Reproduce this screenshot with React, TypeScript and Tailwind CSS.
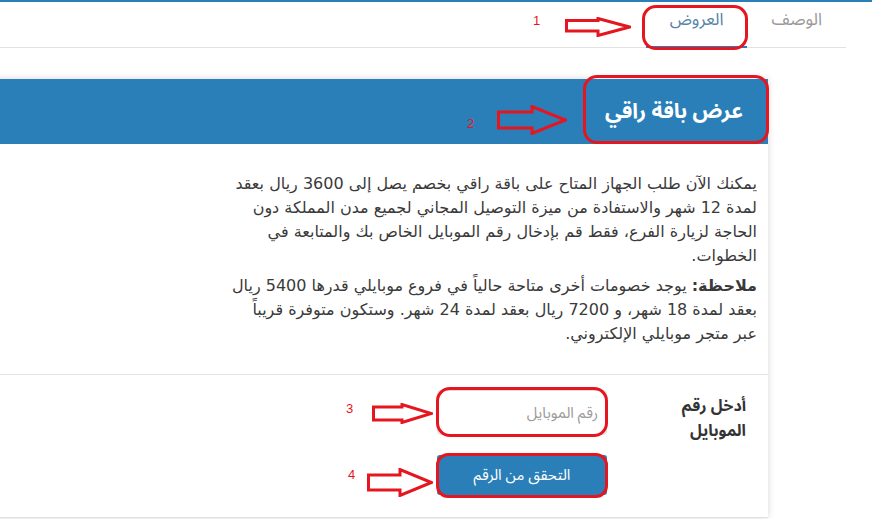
import React from 'react';

const RED = '#e5161f';

function Arrow({ x, y, w, h, st, sb, hx }: { x: number; y: number; w: number; h: number; st: number; sb: number; hx: number }) {
  const pts = `1.5,${st} ${hx},${st} ${hx},1.5 ${w - 1.5},${h / 2} ${hx},${h - 1.5} ${hx},${sb} 1.5,${sb}`;
  return (
    <svg className="absolute" style={{ left: x, top: y }} width={w} height={h} viewBox={`0 0 ${w} ${h}`}>
      <polygon points={pts} fill="none" stroke={RED} strokeWidth={3} strokeLinejoin="miter" />
    </svg>
  );
}

export default function App() {
  return (
    <div dir="rtl" className="relative w-[872px] h-[519px] overflow-hidden bg-white font-['Noto_Sans_Arabic','DejaVu_Sans',sans-serif] text-[#333]">
      <div className="h-[2px] bg-[#2a7fb8]" />

      <div className="mr-[26px] w-[1100px]">
        {/* tabs */}
        <div className="flex h-[46px] border-b border-[#e2e2e2]">
          <div className="px-6 pt-[6px] text-[17px] text-[#9a9a9a]">الوصف</div>
          <div className="-mb-px px-6 pt-[6px] text-[17px] text-[#5683a6] border-b-2 border-[#2a7fb8]">العروض</div>
        </div>

        {/* card */}
        <div className="mt-[31px] mr-[78px] w-[1000px] bg-white shadow-[0_0_7px_rgba(0,0,0,0.16)]">
          <div className="flex h-[65px] items-center bg-[#2a7fb8] pr-[25px] text-[21px] font-bold text-white">
            عرض باقة راقي
          </div>

          <div className="pr-[11px] pt-[28px] pb-[28px] font-['DejaVu_Sans',sans-serif] text-[16px] leading-[24px] text-[#3a3a3a]">
            <div className="whitespace-nowrap">
              <div>يمكنك الآن طلب الجهاز المتاح على باقة راقي بخصم يصل إلى 3600 ريال بعقد</div>
              <div>لمدة 12 شهر والاستفادة من ميزة التوصيل المجاني لجميع مدن المملكة دون</div>
              <div>الحاجة لزيارة الفرع، فقط قم بإدخال رقم الموبايل الخاص بك والمتابعة في</div>
              <div>الخطوات.</div>
            </div>
            <div className="mt-[6px] whitespace-nowrap">
              <div>
                <span className="font-bold">ملاحظة:</span> يوجد خصومات أخرى متاحة حالياً في فروع موبايلي قدرها 5400 ريال
              </div>
              <div>بعقد لمدة 18 شهر، و 7200 ريال بعقد لمدة 24 شهر. وستكون متوفرة قريباً</div>
              <div>عبر متجر موبايلي الإلكتروني.</div>
            </div>
          </div>

          <div className="flex border-t border-b border-[#e2e2e2] pt-[15px] pb-[22px]">
            <div className="w-[161px] pr-[22px] pt-[4px] text-[16px] font-bold leading-[25px] text-[#333]">
              <div>أدخل رقم</div>
              <div>الموبايل</div>
            </div>
            <div className="flex flex-col gap-[20px]">
              <input
                placeholder="رقم الموبايل"
                className="h-[45px] w-[170px] rounded-[4px] border border-[#dcdcdc] px-2 text-[15px] placeholder:text-[#9a9a9a] focus:outline-none"
              />
              <button className="h-[40px] w-[170px] rounded-[3px] bg-[#2a7fb8] text-[15px] text-white">
                التحقق من الرقم
              </button>
            </div>
          </div>
        </div>
      </div>

      {/* annotations */}
      <div dir="ltr">
        <div className="absolute left-[642px] top-[5px] h-[45px] w-[106px] rounded-[14px] border-[3px] border-[#e5161f]" />
        <div className="absolute left-[583px] top-[75px] h-[69px] w-[186px] rounded-[14px] border-[3px] border-[#e5161f]" />
        <div className="absolute left-[436px] top-[387px] h-[50px] w-[172px] rounded-[14px] border-[3px] border-[#e5161f]" />
        <div className="absolute left-[436px] top-[453px] h-[45px] w-[172px] rounded-[12px] border-[3px] border-[#e5161f]" />

        <Arrow x={565} y={17} w={66} h={20} st={3.5} sb={14} hx={33} />
        <Arrow x={497} y={105} w={70} h={30} st={7} sb={23} hx={35} />
        <Arrow x={372} y={403} w={61} h={21} st={4} sb={17} hx={30} />
        <Arrow x={367} y={468} w={66} h={29} st={7} sb={22} hx={33} />

        <span className="absolute left-[533px] top-[11px] font-['Liberation_Sans',sans-serif] text-[13px] text-[#e5161f]">1</span>
        <span className="absolute left-[467px] top-[114px] font-['Liberation_Sans',sans-serif] text-[13px] text-[#e5161f]">2</span>
        <span className="absolute left-[346px] top-[399px] font-['Liberation_Sans',sans-serif] text-[13px] text-[#e5161f]">3</span>
        <span className="absolute left-[348px] top-[465px] font-['Liberation_Sans',sans-serif] text-[13px] text-[#e5161f]">4</span>
      </div>
    </div>
  );
}
